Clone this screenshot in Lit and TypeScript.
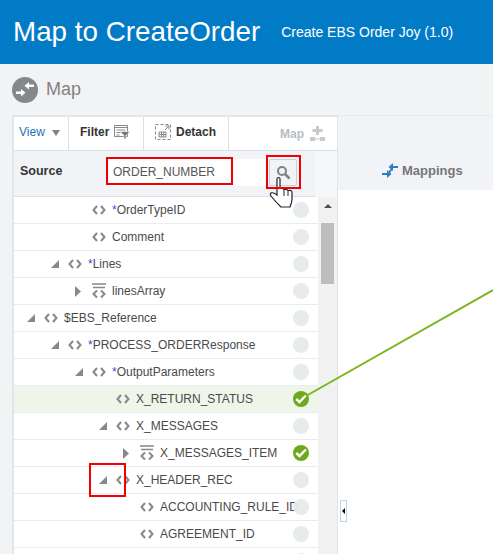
import { LitElement, html, css, svg } from 'lit';
import { customElement } from 'lit/decorators.js';

interface TreeRow {
  label: string;
  level: number;
  arrow?: 'open' | 'closed';
  kind?: 'element' | 'array';
  required?: boolean;
  mapped?: boolean;
  active?: boolean;
}

const ROWS: TreeRow[] = [
  { label: 'OrderTypeID', level: 2, required: true },
  { label: 'Comment', level: 2 },
  { label: 'Lines', level: 1, arrow: 'open', required: true },
  { label: 'linesArray', level: 2, arrow: 'closed', kind: 'array' },
  { label: '$EBS_Reference', level: 0, arrow: 'open' },
  { label: 'PROCESS_ORDERResponse', level: 1, arrow: 'open', required: true },
  { label: 'OutputParameters', level: 2, arrow: 'open', required: true },
  { label: 'X_RETURN_STATUS', level: 3, mapped: true, active: true },
  { label: 'X_MESSAGES', level: 3, arrow: 'open' },
  { label: 'X_MESSAGES_ITEM', level: 4, arrow: 'closed', kind: 'array', mapped: true },
  { label: 'X_HEADER_REC', level: 3, arrow: 'open' },
  { label: 'ACCOUNTING_RULE_ID', level: 4 },
  { label: 'AGREEMENT_ID', level: 4 },
  { label: '', level: 4 },
];

const crumbArrows = svg`
  <path d="M0 10.500h5V8l4.500 3.800L5 15.500V13H0z" />
  <path d="M18 3.500h-5V1L8.500 4.800 13 8.500V6h5z" />
`;

const mappingArrows = svg`
  <path d="M0 10h5V7l4.500 4L5 15v-3H0z" />
  <path d="M16 3h-5V0L6.500 4 11 8V5h5z" />
  <path d="M6 9.500 8.500 6h2.300L8 10z" />
`;

@customElement('app-root')
export class AppRoot extends LitElement {
  static styles = css`
    :host {
      display: block;
      position: relative;
      width: 493px;
      height: 554px;
      overflow: hidden;
      background: #fff;
      font-family: 'Liberation Sans', Arial, sans-serif;
      color: #444;
    }

    .header {
      height: 64px;
      box-sizing: border-box;
      background: #027bc7;
      color: #fff;
      display: flex;
      align-items: center;
      padding-left: 13px;
      white-space: nowrap;
    }
    .header h1 {
      margin: 0;
      font-size: 27.800px;
      font-weight: 400;
    }
    .header span {
      margin-left: 21px;
      font-size: 14px;
    }

    .crumb {
      height: 51px;
      background: #f2f3f5;
      display: flex;
      align-items: center;
      gap: 8px;
      padding-left: 12px;
      color: #86827f;
      font-size: 18px;
    }
    .crumb-icon {
      width: 26px;
      height: 26px;
      border-radius: 50%;
      background: #85888b;
      display: flex;
      align-items: center;
      justify-content: center;
      fill: #fff;
    }

    .body {
      display: flex;
      height: 439px;
      background: #f2f3f5;
    }

    .panel {
      width: 326px;
      margin-left: 12px;
      box-sizing: border-box;
      flex: none;
      border-left: 2px solid #dfe6ec;
      border-top: 2px solid #e3e6ea;
      border-right: 1px solid #dfe6ec;
      display: flex;
      flex-direction: column;
      background: #f1f2f4;
    }

    .toolbar {
      height: 34px;
      flex: none;
      display: flex;
      background: #fff;
      font-size: 12px;
      border-bottom: 1px solid #d8e0e7;
      box-sizing: border-box;
    }
    .tool {
      display: flex;
      align-items: center;
      box-sizing: border-box;
      border-right: 1px solid #d8e0e7;
      padding-bottom: 3px;
      font-weight: 700;
      color: #333;
    }
    .tool.view { width: 55px; padding-left: 5px; gap: 7px; color: #2272b6; font-weight: 400; }
    .tool.filter { width: 75px; padding-left: 11px; gap: 5px; }
    .tool.detach { width: 85px; padding-left: 11px; gap: 5px; }
    .tool.map { flex: 1; border-right: none; padding: 0 0 0 51px; gap: 6px; color: #b9bcbf; }
    .caret {
      width: 0;
      height: 0;
      border-left: 4.5px solid transparent;
      border-right: 4.5px solid transparent;
      border-top: 6px solid #7d8387;
      margin-top: 2px;
    }

    .source-wrap {
      flex: none;
      background: #f6f7f9;
    }
    .source {
      height: 46px;
      box-sizing: border-box;
      display: flex;
      align-items: center;
      background: #f1f3f6;
      border-bottom: 1px solid #d8e0e7;
      padding: 0 0 3px 6px;
      margin-right: 22px;
      font-size: 12px;
    }
    .source b {
      width: 86px;
      color: #333;
      font-size: 12.500px;
      margin-bottom: 2px;
    }
    .search-input {
      width: 159px;
      height: 27px;
      box-sizing: border-box;
      background: #fff;
      padding-left: 7px;
      font-size: 12px;
      line-height: 27px;
      color: #555;
    }
    .search-btn {
      margin-left: 4px;
      width: 28px;
      height: 27px;
      box-sizing: border-box;
      border: 1px solid #c9d1d7;
      border-radius: 2px;
      display: flex;
      align-items: center;
      justify-content: center;
    }

    .tree-area {
      flex: 1;
      display: flex;
      min-height: 0;
    }
    .tree {
      width: 304px;
      flex: none;
      background: #fff;
      overflow: hidden;
    }
    .row {
      height: 27px;
      box-sizing: border-box;
      border-bottom: 1px solid #e9ecee;
      display: flex;
      align-items: center;
      position: relative;
      font-size: 12px;
      color: #4a4a4a;
      white-space: nowrap;
    }
    .row.active { background: #eff5e8; }
    .row-arrow {
      width: 18px;
      flex: none;
      height: 10px;
      display: flex;
      align-items: center;
    }
    .row-arrow svg { margin-left: 1px; }
    .row-icon {
      width: 14px;
      height: 12px;
      flex: none;
      margin-right: 6px;
      display: block;
    }
    .row-icon.array { height: 16px; }
    .row-label {
      overflow: hidden;
      width: 300px;
    }
    .row-label em {
      font-style: normal;
      color: #4444ee;
    }
    .dot {
      position: absolute;
      left: 279px;
      top: 5px;
      width: 16px;
      height: 16px;
      border-radius: 50%;
      background: rgba(230, 235, 234, 0.94);
    }
    .dot.on {
      background: #6ea91c;
      display: flex;
      align-items: center;
      justify-content: center;
    }

    .scrollbar {
      flex: 1;
      background: #f1f1f1;
      display: flex;
      flex-direction: column;
      align-items: center;
    }
    .scroll-up {
      margin-top: 7px;
      width: 0;
      height: 0;
      border-left: 4px solid transparent;
      border-right: 4px solid transparent;
      border-bottom: 4px solid #505050;
    }
    .thumb {
      margin-top: 15px;
      width: 13px;
      height: 61px;
      background: #bdbdbd;
    }

    .side {
      flex: 1;
      display: flex;
      flex-direction: column;
      background: #fff;
    }
    .side-head {
      height: 75px;
      flex: none;
      box-sizing: border-box;
      background: #f1f3f6;
      border-top: 1px solid #e8eaec;
      display: flex;
      align-items: flex-end;
      gap: 4px;
      padding: 0 0 12px 44px;
      font-size: 13px;
      font-weight: 700;
      color: #777;
      fill: #2a7fc0;
    }

    .splitter {
      position: absolute;
      left: 340px;
      top: 500px;
      width: 7px;
      height: 22px;
      box-sizing: border-box;
      background: #fff;
      border: 1px solid #c5d3e0;
      display: flex;
      align-items: center;
      justify-content: center;
    }
    .splitter i {
      width: 0;
      height: 0;
      border-top: 3px solid transparent;
      border-bottom: 3px solid transparent;
      border-right: 3px solid #000;
    }

    .callout {
      position: absolute;
      box-sizing: border-box;
      border: 2px solid #f00000;
    }
    .callout.input { left: 106px; top: 157px; width: 127px; height: 28px; }
    .callout.button { left: 266px; top: 155px; width: 35px; height: 34px; }
    .callout.toggle { left: 89px; top: 463px; width: 37px; height: 34px; }
    .overlay {
      position: absolute;
      left: 0;
      top: 0;
      pointer-events: none;
    }
  `;

  private renderTreeIcon(row: TreeRow) {
    if (row.kind === 'array') {
      return html`<svg class="row-icon array" viewBox="0 0 14 16" fill="none" stroke="#85898c" stroke-width="1.500">
        <path d="M0 1h14M1 4.500h12" />
        <path d="M5 7.500 1.500 11 5 14.500M9 7.500 12.500 11 9 14.500" stroke-width="2" />
      </svg>`;
    }
    return html`<svg class="row-icon" viewBox="0 0 14 12" fill="none" stroke="#85898c" stroke-width="2">
      <path d="M5 2 1.500 6 5 10M9 2l3.500 4L9 10" />
    </svg>`;
  }

  private renderArrow(arrow?: 'open' | 'closed') {
    if (arrow === 'open') {
      return html`<svg width="8" height="8" viewBox="0 0 8 8"><path d="M8 0v8H0z" fill="#85898c" /></svg>`;
    }
    if (arrow === 'closed') {
      return html`<svg width="6" height="11" viewBox="0 0 6 11"><path d="M0 0l6 5.500L0 11z" fill="#85898c" /></svg>`;
    }
    return null;
  }

  private renderRow(row: TreeRow) {
    const left = 12 + row.level * 24;
    return html`
      <div class="row ${row.active ? 'active' : ''}" style="padding-left:${left}px">
        <span class="row-arrow">${this.renderArrow(row.arrow)}</span>
        ${row.label ? this.renderTreeIcon(row) : null}
        <span class="row-label">${row.required ? html`<em>*</em>` : null}${row.label}</span>
        ${row.mapped
          ? html`<span class="dot on"><svg width="12" height="10" viewBox="0 0 12 10" fill="none" stroke="#fff" stroke-width="2.400"><path d="M1.200 5 4.500 8 10.800 1.500" /></svg></span>`
          : html`<span class="dot"></span>`}
      </div>
    `;
  }

  render() {
    return html`
      <div class="header">
        <h1>Map to CreateOrder</h1>
        <span>Create EBS Order Joy (1.0)</span>
      </div>
      <div class="crumb">
        <span class="crumb-icon"><svg width="18" height="18" viewBox="0 0 18 18">${crumbArrows}</svg></span>
        Map
      </div>
      <div class="body">
        <div class="panel">
          <div class="toolbar">
            <div class="tool view">View <span class="caret"></span></div>
            <div class="tool filter">Filter
              <svg width="16" height="14" viewBox="0 0 16 14" fill="none" stroke="#85898c">
                <path d="M.5 .5h13v11H.5zM.5 2.500h13M2.500 5h9M2.500 7.500h4M2.500 10h3" />
                <path d="M6 6.500h10l-4 4V14h-2v-3.500z" fill="#6f7478" stroke="#fff" stroke-width=".6" />
              </svg>
            </div>
            <div class="tool detach">
              <svg width="16" height="16" viewBox="0 0 16 16" fill="none" stroke="#85898c">
                <path d="M.5 .5h15v15H.5z" stroke-dasharray="3 2" />
                <path d="M10.500 2h3.500v3.500M14 2 10 6" />
                <path d="M4 8h7v5H4zM4 10.500h7M6.500 8v5M8.700 8v5" />
              </svg>
              Detach
            </div>
            <div class="tool map">Map
              <svg width="15" height="15" viewBox="0 0 15 15" fill="#c6cacd">
                <path d="M6 0h3v3h3.500v3H9v3H6V6H2.500V3H6z" />
                <path d="M0 11h5v4H0zM10 11h5v4h-5zM5 12.500h5v1H5z" />
              </svg>
            </div>
          </div>
          <div class="source-wrap">
            <div class="source">
              <b>Source</b>
              <div class="search-input">ORDER_NUMBER</div>
              <div class="search-btn">
                <svg width="15" height="15" viewBox="0 0 15 15" fill="none" stroke="#7d8387">
                  <circle cx="6" cy="6" r="4" stroke-width="2" />
                  <path d="M9 9l4.500 4.500" stroke-width="2.600" />
                </svg>
              </div>
            </div>
          </div>
          <div class="tree-area">
            <div class="tree">${ROWS.map((r) => this.renderRow(r))}</div>
            <div class="scrollbar">
              <span class="scroll-up"></span>
              <span class="thumb"></span>
            </div>
          </div>
        </div>
        <div class="side">
          <div class="side-head">
            <svg width="16" height="15" viewBox="0 0 16 15">${mappingArrows}</svg>
            Mappings
          </div>
        </div>
      </div>

      <div class="splitter"><i></i></div>

      <svg class="overlay" width="493" height="554" fill="none">
        <path d="M306 396 493 290" stroke="#7ab51d" stroke-width="2" />
        <path d="M277 179c0-2 3-2 3 0v10c0-1 4-1 4 1 0-1 4-1 4 1 0-1 4-1 4 1v7c0 3-1 5-2 8h-9c-3-3-7-7-10-11-2-3 1-5 6-1z" fill="#fff" stroke="#22222c" stroke-width="1.200" />
        <path d="M284 190v6M288 191v5" stroke="#22222c" />
      </svg>

      <div class="callout input"></div>
      <div class="callout button"></div>
      <div class="callout toggle"></div>
    `;
  }
}
